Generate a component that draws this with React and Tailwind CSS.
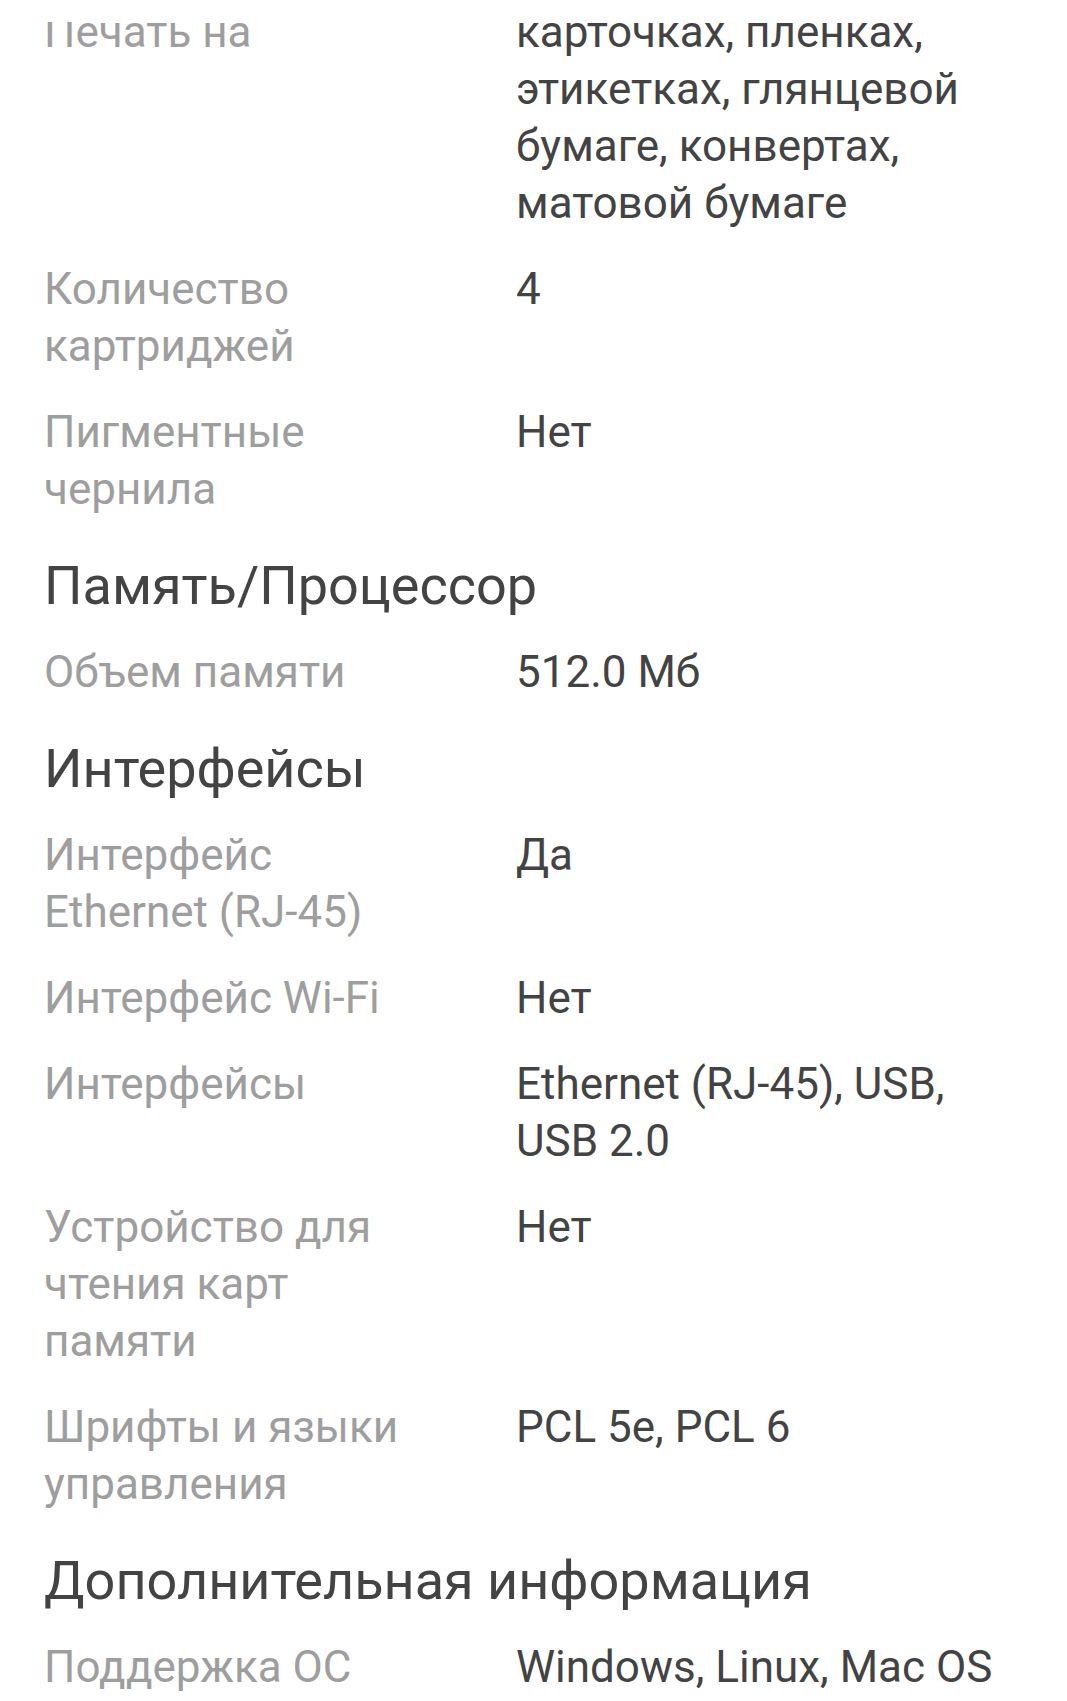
const sections = [
  {
    title: null,
    rows: [
      ["Печать на", "карточках, пленках, этикетках, глянцевой бумаге, конвертах, матовой бумаге"],
      ["Количество картриджей", "4"],
      ["Пигментные чернила", "Нет"],
    ],
  },
  {
    title: "Память/Процессор",
    rows: [["Объем памяти", "512.0 Мб"]],
  },
  {
    title: "Интерфейсы",
    rows: [
      ["Интерфейс Ethernet (RJ-45)", "Да"],
      ["Интерфейс Wi-Fi", "Нет"],
      ["Интерфейсы", "Ethernet (RJ-45), USB, USB 2.0"],
      ["Устройство для чтения карт памяти", "Нет"],
      ["Шрифты и языки управления", "PCL 5e, PCL 6"],
    ],
  },
  {
    title: "Дополнительная информация",
    rows: [["Поддержка ОС", "Windows, Linux, Mac OS"]],
  },
];

const SpecRow = ({ label, value }) => (
  <div className="flex">
    <div className="w-[472px] shrink-0 pr-[92px] text-[#9e9e9e]">{label}</div>
    <div className="flex-1 text-[#434343]">{value}</div>
  </div>
);

export default function App() {
  return (
    <div className="h-[1701px] overflow-hidden bg-white font-['Roboto',sans-serif] text-[44px] leading-[57px]">
      <div className="h-[22px] bg-white" />
      <div className="h-[1679px] overflow-hidden">
        <div className="-mt-[18px] px-[44px]">
          {sections.map((section, i) => (
            <div key={i}>
              {section.title && (
                <h2 className="mt-[34px] mb-[24px] text-[54px] leading-[68px] text-[#434343]">
                  {section.title}
                </h2>
              )}
              <div className="flex flex-col gap-[29px]">
                {section.rows.map(([label, value]) => (
                  <SpecRow key={label} label={label} value={value} />
                ))}
              </div>
            </div>
          ))}
        </div>
      </div>
    </div>
  );
}
